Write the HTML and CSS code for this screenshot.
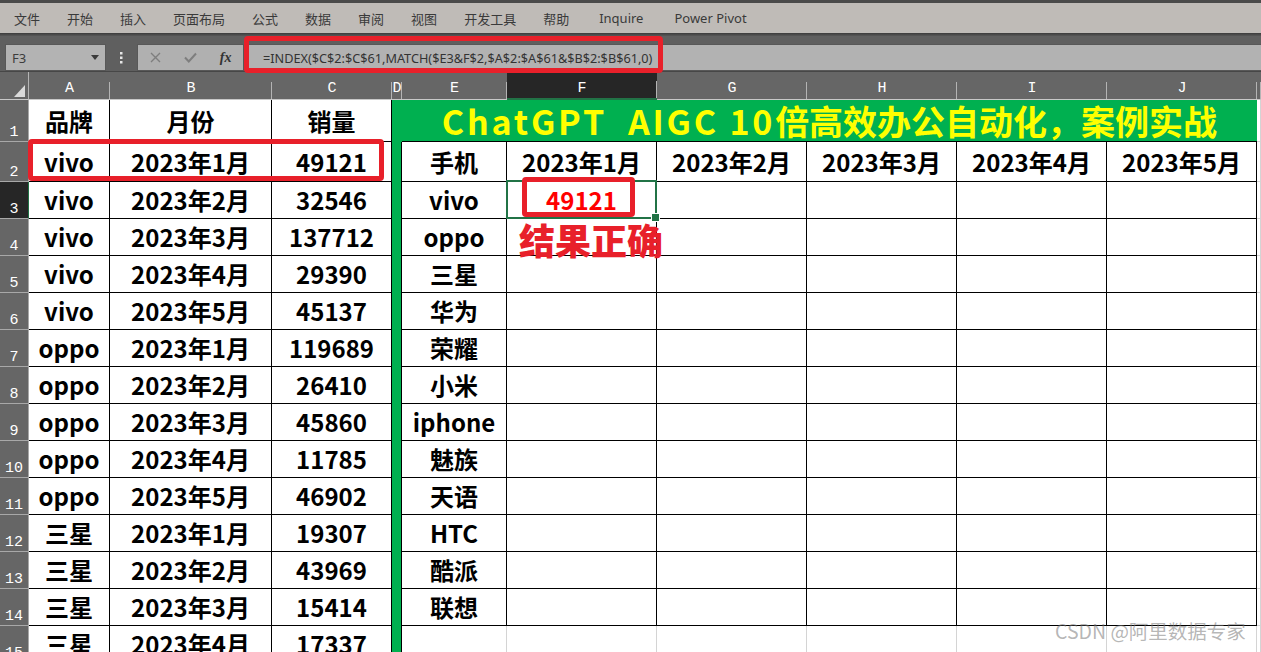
FILE: index.html
```html
<!DOCTYPE html>
<html lang="zh-CN">
<head>
<meta charset="utf-8">
<title>Excel INDEX MATCH</title>
<link rel="stylesheet" href="styles.css">
</head>
<body>
<div class="app">
  <div class="topstrip"></div>
  <nav class="menubar">
    <span>文件</span><span>开始</span><span>插入</span><span>页面布局</span><span>公式</span><span>数据</span><span>审阅</span><span>视图</span><span>开发工具</span><span>帮助</span><span class="en">Inquire</span><span class="en pp">Power Pivot</span>
  </nav>
  <div class="menushadow"></div>
  <div class="fbar">
    <div class="namebox"><span>F3</span><svg width="8" height="5" viewBox="0 0 8 5"><polygon points="0,0 8,0 4,5" fill="#3a3a3a"/></svg></div>
    <div class="dots"><svg width="3" height="12" viewBox="0 0 3 12"><rect x="0" y="0" width="2.5" height="2.5" fill="#e6e6e6"/><rect x="0" y="4.5" width="2.5" height="2.5" fill="#e6e6e6"/><rect x="0" y="9" width="2.5" height="2.5" fill="#e6e6e6"/></svg></div>
    <div class="fbtns">
      <svg width="11" height="11" viewBox="0 0 11 11"><path d="M1 1 L10 10 M10 1 L1 10" stroke="#7e7e7e" stroke-width="1.4" fill="none"/></svg>
      <svg width="13" height="11" viewBox="0 0 13 11"><path d="M1 5.5 L4.8 9.5 L12 1.5" stroke="#7e7e7e" stroke-width="2" fill="none"/></svg>
      <span class="fx">fx</span>
    </div>
    <div class="finput">=INDEX($C$2:$C$61,MATCH($E3&amp;F$2,$A$2:$A$61&amp;$B$2:$B$61,0)</div>
  </div>

  <div class="sheet">
    <!-- column headers -->
    <div class="corner"><svg width="11" height="12" viewBox="0 0 11 12"><polygon points="11,0 11,12 0,12" fill="#dadada"/></svg></div>
    <div class="ch">A</div><div class="ch">B</div><div class="ch">C</div><div class="ch">D</div><div class="ch">E</div><div class="ch sel">F</div><div class="ch">G</div><div class="ch">H</div><div class="ch">I</div><div class="ch">J</div><div class="ch"></div>

    <!-- row 1 -->
    <div class="rh">1</div>
    <div class="c t">品牌</div><div class="c t">月份</div><div class="c t">销量</div>
    <div class="c d d1"></div>
    <div class="c title"><span class="lat">ChatGPT&nbsp; AIGC 10</span>倍高效办公自动化，案例实战</div>
    <div class="c"></div>

    <!-- row 2 -->
    <div class="rh">2</div>
    <div class="c t">vivo</div><div class="c t">2023年1月</div><div class="c t">49121</div>
    <div class="c d"></div>
    <div class="c t">手机</div><div class="c t">2023年1月</div><div class="c t">2023年2月</div><div class="c t">2023年3月</div><div class="c t">2023年4月</div><div class="c t">2023年5月</div>
    <div class="c"></div>

    <!-- row 3 -->
    <div class="rh sel">3</div>
    <div class="c t">vivo</div><div class="c t">2023年2月</div><div class="c t">32546</div>
    <div class="c d"></div>
    <div class="c t">vivo</div><div class="c t red selcell">49121</div><div class="c t"></div><div class="c t"></div><div class="c t"></div><div class="c t"></div>
    <div class="c"></div>

    <!-- row 4 -->
    <div class="rh">4</div>
    <div class="c t">vivo</div><div class="c t">2023年3月</div><div class="c t">137712</div>
    <div class="c d"></div>
    <div class="c t">oppo</div><div class="c t"></div><div class="c t"></div><div class="c t"></div><div class="c t"></div><div class="c t"></div>
    <div class="c"></div>

    <!-- row 5 -->
    <div class="rh">5</div>
    <div class="c t">vivo</div><div class="c t">2023年4月</div><div class="c t">29390</div>
    <div class="c d"></div>
    <div class="c t">三星</div><div class="c t"></div><div class="c t"></div><div class="c t"></div><div class="c t"></div><div class="c t"></div>
    <div class="c"></div>

    <!-- row 6 -->
    <div class="rh">6</div>
    <div class="c t">vivo</div><div class="c t">2023年5月</div><div class="c t">45137</div>
    <div class="c d"></div>
    <div class="c t">华为</div><div class="c t"></div><div class="c t"></div><div class="c t"></div><div class="c t"></div><div class="c t"></div>
    <div class="c"></div>

    <!-- row 7 -->
    <div class="rh">7</div>
    <div class="c t">oppo</div><div class="c t">2023年1月</div><div class="c t">119689</div>
    <div class="c d"></div>
    <div class="c t">荣耀</div><div class="c t"></div><div class="c t"></div><div class="c t"></div><div class="c t"></div><div class="c t"></div>
    <div class="c"></div>

    <!-- row 8 -->
    <div class="rh">8</div>
    <div class="c t">oppo</div><div class="c t">2023年2月</div><div class="c t">26410</div>
    <div class="c d"></div>
    <div class="c t">小米</div><div class="c t"></div><div class="c t"></div><div class="c t"></div><div class="c t"></div><div class="c t"></div>
    <div class="c"></div>

    <!-- row 9 -->
    <div class="rh">9</div>
    <div class="c t">oppo</div><div class="c t">2023年3月</div><div class="c t">45860</div>
    <div class="c d"></div>
    <div class="c t">iphone</div><div class="c t"></div><div class="c t"></div><div class="c t"></div><div class="c t"></div><div class="c t"></div>
    <div class="c"></div>

    <!-- row 10 -->
    <div class="rh">10</div>
    <div class="c t">oppo</div><div class="c t">2023年4月</div><div class="c t">11785</div>
    <div class="c d"></div>
    <div class="c t">魅族</div><div class="c t"></div><div class="c t"></div><div class="c t"></div><div class="c t"></div><div class="c t"></div>
    <div class="c"></div>

    <!-- row 11 -->
    <div class="rh">11</div>
    <div class="c t">oppo</div><div class="c t">2023年5月</div><div class="c t">46902</div>
    <div class="c d"></div>
    <div class="c t">天语</div><div class="c t"></div><div class="c t"></div><div class="c t"></div><div class="c t"></div><div class="c t"></div>
    <div class="c"></div>

    <!-- row 12 -->
    <div class="rh">12</div>
    <div class="c t">三星</div><div class="c t">2023年1月</div><div class="c t">19307</div>
    <div class="c d"></div>
    <div class="c t">HTC</div><div class="c t"></div><div class="c t"></div><div class="c t"></div><div class="c t"></div><div class="c t"></div>
    <div class="c"></div>

    <!-- row 13 -->
    <div class="rh">13</div>
    <div class="c t">三星</div><div class="c t">2023年2月</div><div class="c t">43969</div>
    <div class="c d"></div>
    <div class="c t">酷派</div><div class="c t"></div><div class="c t"></div><div class="c t"></div><div class="c t"></div><div class="c t"></div>
    <div class="c"></div>

    <!-- row 14 -->
    <div class="rh">14</div>
    <div class="c t">三星</div><div class="c t">2023年3月</div><div class="c t">15414</div>
    <div class="c d"></div>
    <div class="c t">联想</div><div class="c t"></div><div class="c t"></div><div class="c t"></div><div class="c t"></div><div class="c t"></div>
    <div class="c"></div>

    <!-- row 15 -->
    <div class="rh">15</div>
    <div class="c t">三星</div><div class="c t">2023年4月</div><div class="c t">17337</div>
    <div class="c d"></div>
    <div class="c"></div><div class="c"></div><div class="c"></div><div class="c"></div><div class="c"></div><div class="c"></div>
    <div class="c"></div>
  </div>

  <div class="hl hl-formula"></div>
  <div class="hl hl-row"></div>
  <div class="hl hl-cell"></div>
  <div class="note">结果正确</div>
  <div class="wm">CSDN @阿里数据专家</div>
</div>
</body>
</html>
```

FILE: styles.css
```css
* { box-sizing: border-box; }
html, body { margin: 0; padding: 0; }
body {
  width: 1261px;
  height: 652px;
  overflow: hidden;
  background: #fff;
  font-family: "Noto Sans CJK SC", "Noto Sans", sans-serif;
}
.app { position: relative; width: 1261px; height: 652px; overflow: hidden; }

.topstrip { height: 3px; background: #4a4a4a; }

.menubar {
  height: 30px;
  background: #bfbbb7;
  display: flex;
  align-items: center;
  padding-left: 14px;
  gap: 27px;
  font-size: 13px;
  color: #3a3a3a;
  font-family: "Noto Sans CJK SC", sans-serif;
}
.menubar .en { font-family: "Noto Sans", "Open Sans", sans-serif; margin-left: 3px; }
.menubar .pp { margin-left: 4px; }

.menushadow { height: 3px; background: linear-gradient(#3b3b3b, #585858); }

.fbar {
  height: 36px;
  background: #5f5f5f;
  display: flex;
  align-items: flex-start;
  padding-top: 8px;
  border-bottom: 1px solid #474747;
}
.namebox {
  margin-left: 5px;
  width: 101px;
  height: 27px;
  background: #b3b3b3;
  border: 1px solid #585858;
  display: flex;
  align-items: center;
  justify-content: space-between;
  padding: 0 6px 0 6px;
  font-family: "Noto Sans", sans-serif;
  font-size: 13px;
  color: #3c3c3c;
}
.dots { width: 31px; height: 27px; display: flex; align-items: center; justify-content: center; }
.fbtns {
  width: 107px;
  height: 27px;
  background: #b0b0b0;
  border: 1px solid #585858;
  display: flex;
  align-items: center;
  justify-content: space-around;
}
.fx {
  font-family: "Liberation Serif", serif;
  font-style: italic;
  font-weight: 700;
  font-size: 14px;
  color: #333;
}
.finput {
  flex: 1;
  height: 27px;
  margin-left: 1px;
  background: #b2b2b2;
  border: 1px solid #585858;
  border-right: none;
  padding-left: 17px;
  display: flex;
  align-items: center;
  font-family: "Noto Sans", sans-serif;
  font-size: 12.7px;
  color: #333;
  white-space: nowrap;
}

.sheet {
  display: grid;
  grid-template-columns: 29px 81px 162px 120px 10px 105px repeat(5, 150px) 1fr;
  grid-template-rows: 28px 42px 40px repeat(13, 37px);
}

.corner {
  background: #666;
  border-bottom: 1px solid #c8c8c8;
  border-right: 1px solid #b4b4b4;
  display: flex;
  justify-content: flex-end;
  align-items: flex-end;
  padding: 0 3px 2px 0;
}
.ch {
  background: #666 linear-gradient(#b4b4b4, #b4b4b4) right bottom / 1px 17px no-repeat;
  border-bottom: 1px solid #c8c8c8;
  color: #fff;
  font-family: "Liberation Mono", monospace;
  font-size: 15px;
  line-height: 16px;
  display: flex;
  justify-content: center;
  align-items: flex-end;
  padding-bottom: 2px;
}
.ch.sel {
  background: #262626 linear-gradient(#b4b4b4, #b4b4b4) right bottom / 1px 17px no-repeat;
  border-bottom: 2px solid #217346;
  padding-bottom: 1px;
}
.rh {
  background: #666;
  border-bottom: 1px solid #a8a8a8;
  border-right: 1px solid #a8a8a8;
  color: #fff;
  font-family: "Liberation Mono", monospace;
  font-size: 15px;
  line-height: 15px;
  display: flex;
  justify-content: center;
  align-items: flex-end;
  padding-bottom: 1px;
}
.rh.sel { background: #262626; border-right: 1px solid #217346; }

.c {
  background: #fff;
  border-right: 1px solid #d4d4d4;
  border-bottom: 1px solid #d4d4d4;
  display: flex;
  align-items: center;
  justify-content: center;
  font-size: 24px;
  font-weight: 700;
  line-height: 1;
  color: #000;
  white-space: nowrap;
}
.c.t { border-color: #000; }
.c.d { background: #00b050; border-right: 1px solid #000; border-bottom: none; }
.c.d1 { border-right: none; }
.c.title {
  grid-column: span 6;
  background: #00b050;
  color: #ffff00;
  font-size: 34px;
  border-right: none;
  border-bottom: 1px solid #000;
}
.c.title .lat { letter-spacing: 2.8px; }
.c.red { color: #ff0000; }
.selcell { position: relative; }
.selcell::after {
  content: "";
  position: absolute;
  top: -2px; left: -1px; right: -1px; bottom: -1px;
  border: 2px solid #217346;
}
.selcell::before {
  content: "";
  position: absolute;
  right: -4px; bottom: -4px;
  width: 7px; height: 7px;
  background: #217346;
  border: 1px solid #fff;
  z-index: 1;
}

.hl {
  position: absolute;
  border: 5px solid #e8202a;
  border-radius: 4px;
}
.hl-formula { left: 244px; top: 36px; width: 419px; height: 37px; }
.hl-row { left: 28px; top: 139px; width: 356px; height: 42px; }
.hl-cell { left: 522px; top: 177px; width: 113px; height: 40px; }

.note {
  position: absolute;
  left: 519px;
  top: 221px;
  font-size: 36px;
  font-weight: 900;
  line-height: 36px;
  color: #e8202a;
}
.wm {
  position: absolute;
  left: 1055px;
  top: 618px;
  font-size: 19.5px;
  line-height: 26px;
  color: rgba(120, 120, 120, 0.55);
  font-family: "Noto Sans CJK SC", sans-serif;
}
```
